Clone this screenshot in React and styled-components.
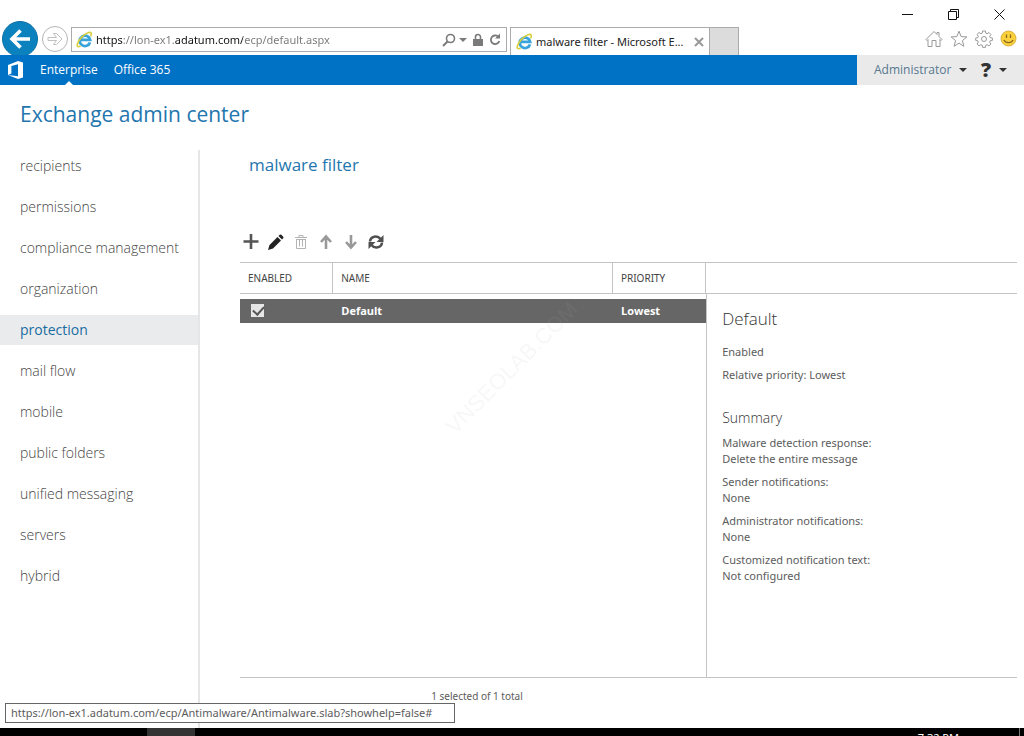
import React from "react";
import styled, { createGlobalStyle, css } from "styled-components";

const BLUE = "#0072c6";
const LINE = "#c4c4c4";
const DISPLAY = `"Open Sans", "Noto Sans", sans-serif`;

const GlobalStyle = createGlobalStyle`
  * { box-sizing: border-box; }
  body { margin: 0; background: #fff; color: #5c5c5c; font-family: "Noto Sans", "Open Sans", sans-serif; font-size: 11px; }
  button, input { font: inherit; color: inherit; }
  h1, h2, h3, p, ul, dl, dd { margin: 0; padding: 0; font-weight: inherit; }
  ul { list-style: none; }
  svg { display: block; flex: none; }
`;

const Screen = styled.div`
  display: flex;
  flex-direction: column;
  height: 100vh;
  overflow: hidden;
  position: relative;
`;

/* Browser frame */
const BrowserFrame = styled.header`
  flex: none;
`;
const WindowControls = styled.div`
  display: flex;
  justify-content: flex-end;
  align-items: center;
  height: 27px;
  padding: 2px 2px 0 0;
`;
const PlainButton = styled.button`
  display: flex;
  align-items: center;
  justify-content: center;
  flex: none;
  padding: 0;
  border: 0;
  background: none;
`;
const WindowButton = styled(PlainButton)`
  width: 46px;
  height: 24px;
  color: #111;
`;
const BrowserBar = styled.div`
  display: flex;
  height: 28px;
  padding: 0 7px 0 2px;
`;
const RoundButton = styled(PlainButton)`
  width: ${(p) => p.$size}px;
  height: ${(p) => p.$size}px;
  border-radius: 50%;
  color: ${(p) => (p.$primary ? "#fff" : "#c0c0c0")};
  background: ${(p) => (p.$primary ? "#0b82be" : "#fff")};
  border: 1px solid ${(p) => (p.$primary ? "#0b6fa8" : "#b5b5b5")};
`;
const History = styled.div`
  display: flex;
  align-items: center;
  gap: 4px;
  width: 69px;
  height: 24px;
`;
const AddressBar = styled.form`
  display: flex;
  align-items: center;
  gap: 3px;
  flex: 0 1 436px;
  height: 25px;
  padding: 0 5px 0 4px;
  border: 1px solid #ababab;
  color: #7a7a7a;
`;
const AddressInput = styled.input`
  flex: 1;
  min-width: 0;
  height: 22px;
  padding: 0;
  border: 0;
  outline: 0;
  color: transparent;
  background: linear-gradient(90deg, #111 27px, #777 27px 79px, #111 79px 147px, #777 147px);
  background-clip: text;
`;
const Tab = styled.div`
  display: flex;
  align-items: center;
  gap: 3px;
  flex: 0 1 200px;
  margin-left: 3px;
  padding: 0 5px;
  border: 1px solid #ababab;
  border-bottom: 0;
  color: #222;
  white-space: nowrap;
`;
const TabTitle = styled.span`
  flex: 1;
`;
const NewTab = styled(PlainButton)`
  width: 29px;
  border: 1px solid #ababab;
  border-width: 1px 1px 0 0;
  background: #dcdcdc;
`;
const BrowserTools = styled.div`
  display: flex;
  align-items: center;
  gap: 7px;
  height: 23px;
  margin-left: auto;
  color: #999;
`;

/* Suite bar */
const SuiteBar = styled.nav`
  position: relative;
  flex: none;
  display: flex;
  align-items: center;
  height: 30px;
  padding-left: 8px;
  background: ${BLUE};
  color: #fff;
  font-family: ${DISPLAY};
  font-size: 12px;
`;
const SuiteLink = styled.a`
  position: relative;
  margin-left: 16px;
  line-height: 30px;
  color: #fff;
  text-decoration: none;
  ${(p) =>
    p.$current &&
    css`
      &::after {
        content: "";
        position: absolute;
        left: 50%;
        bottom: 0;
        margin-left: -4px;
        border: 4px solid transparent;
        border-top: 0;
        border-bottom-color: #fff;
      }
    `}
`;
const UserArea = styled.div`
  display: flex;
  align-items: center;
  justify-content: space-between;
  width: 167px;
  height: 30px;
  margin-left: auto;
  padding: 0 17px;
  background: #eaeaea;
`;
const MenuButton = styled(PlainButton)`
  gap: 8px;
  color: #333;
  line-height: 28px;
  font-size: ${(p) => (p.$strong ? 20 : 11)}px;
  font-weight: ${(p) => (p.$strong ? 800 : 400)};
`;
const UserName = styled.span`
  color: #56788f;
  font-size: 12px;
`;

/* Admin center */
const PageTitle = styled.h1`
  flex: none;
  height: 65px;
  padding: 13px 20px 0;
  color: #1f76ae;
  font-family: ${DISPLAY};
  font-size: 21px;
  line-height: 32px;
`;
const Workspace = styled.div`
  flex: 1;
  min-height: 0;
  display: flex;
`;
const SideNav = styled.ul`
  flex: none;
  display: flex;
  flex-direction: column;
  gap: 11px;
  width: 200px;
  padding-top: 1px;
  border-right: 2px solid #e6e6e6;
  font-family: ${DISPLAY};
`;
const SideLink = styled.a`
  display: block;
  padding-left: 20px;
  line-height: 30px;
  font-size: 14px;
  font-weight: ${(p) => (p.$current ? 400 : 300)};
  color: ${(p) => (p.$current ? "#1a6ca3" : "#444")};
  background: ${(p) => (p.$current ? "#eaebec" : "transparent")};
  text-decoration: none;
`;
const Content = styled.main`
  flex: 1;
  min-width: 0;
  display: flex;
  flex-direction: column;
  padding: 0 7px 0 40px;
`;
const SectionTitle = styled.h2`
  height: 80px;
  padding-left: 9px;
  color: #1f76ae;
  font-family: ${DISPLAY};
  font-size: 17px;
  line-height: 30px;
`;
const Toolbar = styled.div`
  display: flex;
  align-items: center;
  gap: 1px;
  height: 24px;
  margin: 0 0 8px -1px;
`;
const ToolButton = styled(PlainButton)`
  width: 24px;
  height: 24px;
  color: ${(p) => p.$tone};
`;
const SplitView = styled.div`
  flex: 1;
  min-height: 0;
  display: grid;
  grid-template-columns: 3fr 2fr;
  border-top: 1px solid ${LINE};
  border-bottom: 1px solid ${LINE};
`;
const PolicyTable = styled.table`
  width: 100%;
  align-self: start;
  border-collapse: separate;
  border-spacing: 0;
  table-layout: fixed;
  text-align: left;
`;
const HeadCell = styled.th`
  width: ${(p) => p.$width};
  height: 31px;
  padding: 0 8px;
  border-right: 1px solid ${LINE};
  border-bottom: 1px solid ${LINE};
  font-size: 10px;
  font-weight: 400;
  color: #444;
`;
const PolicyRow = styled.tr`
  & > td {
    height: 34px;
    padding: 0 8px 2px;
    color: #fff;
    font-family: ${DISPLAY};
    font-weight: 700;
    border: solid #fff;
    border-width: 5px 0;
    background: #666;
  }
`;
const CheckBox = styled.input`
  appearance: none;
  display: block;
  width: 13px;
  height: 13px;
  margin: 0 0 0 3px;
  background: #e6e6e6;
  &:checked::after {
    content: "";
    display: block;
    width: 5px;
    height: 9px;
    margin: 0 0 0 4px;
    border: solid #555;
    border-width: 0 2px 2px 0;
    transform: rotate(42deg);
  }
`;
const Details = styled.aside`
  display: flex;
  flex-direction: column;
`;
const DetailsHead = styled.div`
  height: 31px;
  flex: none;
  border-bottom: 1px solid ${LINE};
`;
const DetailsBody = styled.div`
  flex: 1;
  padding: 12px 15px;
  border-left: 1px solid ${LINE};
  line-height: 16px;
`;
const DetailsTitle = styled.h3`
  margin-bottom: 12px;
  font-family: ${DISPLAY};
  font-size: 17px;
  line-height: 26px;
  font-weight: 300;
  color: #333;
`;
const Fact = styled.p`
  margin-bottom: 7px;
`;
const SummaryTitle = styled.h3`
  margin: 25px 0 7px;
  font-family: ${DISPLAY};
  font-size: 14px;
  line-height: 20px;
  font-weight: 300;
  color: #333;
`;
const SummaryItem = styled.div`
  margin-bottom: 7px;
`;
const ListFooter = styled.p`
  flex: none;
  height: 50px;
  width: 61%;
  padding-top: 8px;
  font-size: 10px;
  line-height: 20px;
  text-align: center;
`;

const LinkStatus = styled.div`
  position: absolute;
  left: 5px;
  bottom: 13px;
  min-width: 450px;
  height: 20px;
  padding: 0 5px;
  border: 1px solid #666;
  background: #fff;
  line-height: 18px;
  white-space: nowrap;
`;
const Watermark = styled.div`
  position: absolute;
  left: 50%;
  top: 50%;
  transform: translate(-50%, -50%) rotate(-45deg);
  font-family: "Liberation Sans", sans-serif;
  font-size: 22px;
  line-height: 24px;
  color: rgba(170, 170, 170, 0.1);
  pointer-events: none;
`;
const Taskbar = styled.footer`
  flex: none;
  display: flex;
  justify-content: space-between;
  height: 8px;
  padding: 0 4px 0 147px;
  overflow: hidden;
  background: #000;
  color: #fff;
`;
const TaskButton = styled(PlainButton)`
  width: 48px;
  background: #333;
`;
const Clock = styled.time`
  padding: 2px 60px 0 0;
  border-right: 1px solid #777;
  line-height: 16px;
`;

const BrowserLogo = () => (
  <svg width="17" height="17" viewBox="0 0 17 17" fill="none">
    <path d="M14 11.3A5.2 5.2 0 1 1 14.1 8.8H5.2" stroke="#39a3dc" strokeWidth="2.8" />
    <path d="M14.6 5.4C16 2.6 15.3.9 12.7 1.5 8 2.7 2.4 8.7 1.3 13.2c-.6 2.7 1 3 3.3 1.8" stroke="#d9cf3c" strokeWidth="1.6" />
  </svg>
);
const OfficeLogo = () => (
  <svg width="16" height="18" viewBox="0 0 16 18">
    <path fill="#fff" d="M0 4 10 0l5 1.5v15L10 18 0 14l10 1.3V3.2L3.4 4.9v7.7L0 14z" />
  </svg>
);
const Caret = ({ size = 8 }) => (
  <svg width={size} height={size / 2} viewBox="0 0 8 4">
    <path d="M0 0h8L4 4z" fill="currentColor" />
  </svg>
);
const Home = () => (
  <svg width="18" height="18" viewBox="0 0 18 18" fill="none" stroke="currentColor">
    <path d="M1 9.5 9 1.5l3 3V2.5h2v4l3 3-1 1-1-1v7h-4v-6H7v6H3v-7l-1 1z" />
  </svg>
);
const Star = () => (
  <svg width="18" height="18" viewBox="0 0 18 18" fill="none" stroke="currentColor">
    <path d="m9 1.2 2.1 5.4 5.8.3-4.5 3.7 1.5 5.7L9 13.1l-4.9 3.2 1.5-5.7L1.1 6.9l5.8-.3z" />
  </svg>
);
const Gear = () => (
  <svg width="18" height="18" viewBox="0 0 18 18" fill="none" stroke="currentColor">
    <path d="M7.6 1h2.8l.4 2.2 1.3.5 1.9-1.2 1.9 1.9-1.2 1.9.5 1.3 2.2.4v2.4l-2.2.4-.5 1.3 1.2 1.9-1.9 1.9-1.9-1.2-1.3.5-.4 2.2H7.6l-.4-2.2-1.3-.5L4 15.9l-1.9-1.9 1.2-1.9-.5-1.3L.7 10.4V8l2.1-.4.5-1.3L2.1 4.4 4 2.5l1.9 1.2 1.3-.5z" />
    <circle cx="9" cy="9" r="2.5" />
  </svg>
);
const Smiley = () => (
  <svg width="17" height="17" viewBox="0 0 17 17">
    <circle cx="8.5" cy="8.5" r="7.5" fill="#fbd13b" stroke="#d9b040" />
    <path d="M6.5 4.5v3.500M10.5 4.5v3.500M4 10c1.5 3.5 7.5 3.5 9 0" fill="none" stroke="#8a6a20" strokeWidth="1.3" />
  </svg>
);

const TOOLS = [
  ["New", "#555", <path d="M8 0v15M.5 7.5h15" stroke="currentColor" strokeWidth="2.6" />],
  [
    "Edit",
    "#222",
    <g fill="currentColor">
      <path d="m1.5 11 8-8 3.5 3.5-8 8L0 16z" />
      <path d="m10.5 2 1.2-1.2q.8-.8 1.6 0l1.9 1.9q.8.8 0 1.6L14 5.5z" />
    </g>,
  ],
  [
    "Delete",
    "#b4b4b4",
    <path d="M2 3.5h12M6 3V1.5h4V3M3.5 5v9.5h9V5M6.5 5.5v7M9.5 5.5v7M3 5.5h10" stroke="currentColor" fill="none" />,
  ],
  ["Move up", "#999", <path d="M8 15V3M3 8l5-5.5L13 8" stroke="currentColor" strokeWidth="2.6" fill="none" />],
  ["Move down", "#999", <path d="M8 1v12M3 8l5 5.5L13 8" stroke="currentColor" strokeWidth="2.6" fill="none" />],
  [
    "Refresh",
    "#505050",
    <g>
      <path d="M2 7.5C2.5 2 9.5 1 12.5 5M14 8.5C13.5 14 6.5 15 3.5 11" fill="none" stroke="currentColor" strokeWidth="2.6" />
      <path d="M15.5 1v7H8.5zM.5 15V8h7z" fill="currentColor" />
    </g>,
  ],
];

const SECTIONS = [
  "recipients",
  "permissions",
  "compliance management",
  "organization",
  "protection",
  "mail flow",
  "mobile",
  "public folders",
  "unified messaging",
  "servers",
  "hybrid",
];

const SUMMARY = [
  ["Malware detection response:", "Delete the entire message"],
  ["Sender notifications:", "None"],
  ["Administrator notifications:", "None"],
  ["Customized notification text:", "Not configured"],
];

export default function App() {
  return (
    <Screen>
      <GlobalStyle />
      <BrowserFrame>
        <WindowControls>
          <WindowButton aria-label="Minimize">
            <svg width="11" height="11"><path d="M0 5.5h11" stroke="currentColor" /></svg>
          </WindowButton>
          <WindowButton aria-label="Restore">
            <svg width="11" height="11" fill="none" stroke="currentColor">
              <path d="M.5 2.5h8v8h-8zM2.5 2.5v-2h8v8h-2" />
            </svg>
          </WindowButton>
          <WindowButton aria-label="Close">
            <svg width="11" height="11"><path d="m.5.5 10 10m0-10-10 10" stroke="currentColor" /></svg>
          </WindowButton>
        </WindowControls>
        <BrowserBar>
          <History>
            <RoundButton $size={36} $primary aria-label="Back">
              <svg width="22" height="20" viewBox="0 0 22 20" fill="none" stroke="currentColor" strokeWidth="3.6">
                <path d="M21 10H3M11.5 1.5 3 10l8.5 8.5" />
              </svg>
            </RoundButton>
            <RoundButton $size={26} aria-label="Forward">
              <svg width="16" height="14" viewBox="0 0 16 14" fill="none" stroke="currentColor">
                <path d="M1 5.5h8.5L6.5 1.5h3L15 7l-5.5 5.5h-3l3-4H1z" />
              </svg>
            </RoundButton>
          </History>
          <AddressBar onSubmit={(e) => e.preventDefault()}>
            <BrowserLogo />
            <AddressInput aria-label="Address" defaultValue="https://lon-ex1.adatum.com/ecp/default.aspx" />
            <PlainButton type="button" aria-label="Search">
              <svg width="14" height="14" viewBox="0 0 14 14" fill="none" stroke="currentColor">
                <circle cx="8.5" cy="5.5" r="4" strokeWidth="1.6" />
                <path d="M5.5 8.5 1 13" strokeWidth="2" />
              </svg>
            </PlainButton>
            <PlainButton type="button" aria-label="Address list"><Caret size={8} /></PlainButton>
            <PlainButton type="button" aria-label="Security report">
              <svg width="16" height="14" viewBox="0 0 16 14">
                <path d="M5.5 6V4a2.5 2.5 0 0 1 5 0v2" fill="none" stroke="currentColor" strokeWidth="1.6" />
                <path d="M3 6h10v7H3z" fill="currentColor" />
              </svg>
            </PlainButton>
            <PlainButton type="button" aria-label="Refresh page">
              <svg width="12" height="14" viewBox="0 0 12 14" fill="none" stroke="currentColor">
                <path d="M9 3.5A4.3 4.3 0 1 0 10.3 8" strokeWidth="1.8" />
                <path d="M6 5.5h5V.5z" fill="currentColor" stroke="none" />
              </svg>
            </PlainButton>
          </AddressBar>
          <Tab>
            <BrowserLogo />
            <TabTitle>malware filter - Microsoft E...</TabTitle>
            <PlainButton aria-label="Close tab">
              <svg width="10" height="10"><path d="m1 1 8 8m0-8-8 8" stroke="#999" strokeWidth="2" /></svg>
            </PlainButton>
          </Tab>
          <NewTab aria-label="New tab" />
          <BrowserTools>
            <PlainButton aria-label="Home"><Home /></PlainButton>
            <PlainButton aria-label="Favorites"><Star /></PlainButton>
            <PlainButton aria-label="Tools"><Gear /></PlainButton>
            <PlainButton aria-label="Feedback"><Smiley /></PlainButton>
          </BrowserTools>
        </BrowserBar>
      </BrowserFrame>

      <SuiteBar>
        <OfficeLogo />
        <SuiteLink href="#enterprise" $current>Enterprise</SuiteLink>
        <SuiteLink href="#office365">Office 365</SuiteLink>
        <UserArea>
          <MenuButton><UserName>Administrator</UserName><Caret /></MenuButton>
          <MenuButton $strong aria-label="Help">?<Caret /></MenuButton>
        </UserArea>
      </SuiteBar>

      <PageTitle>Exchange admin center</PageTitle>
      <Workspace>
        <SideNav>
          {SECTIONS.map((name) => (
            <li key={name}>
              <SideLink href={"#" + name} $current={name === "protection"}>{name}</SideLink>
            </li>
          ))}
        </SideNav>
        <Content>
          <SectionTitle>malware filter</SectionTitle>
          <Toolbar>
            {TOOLS.map(([label, tone, drawing]) => (
              <ToolButton key={label} $tone={tone} aria-label={label}>
                <svg width="16" height="16" viewBox="0 0 16 16">{drawing}</svg>
              </ToolButton>
            ))}
          </Toolbar>
          <SplitView>
            <PolicyTable>
              <thead>
                <tr>
                  <HeadCell $width="20%">ENABLED</HeadCell>
                  <HeadCell $width="60%">NAME</HeadCell>
                  <HeadCell $width="20%">PRIORITY</HeadCell>
                </tr>
              </thead>
              <tbody>
                <PolicyRow>
                  <td><CheckBox type="checkbox" defaultChecked aria-label="Default enabled" /></td>
                  <td>Default</td>
                  <td>Lowest</td>
                </PolicyRow>
              </tbody>
            </PolicyTable>
            <Details>
              <DetailsHead />
              <DetailsBody>
                <DetailsTitle>Default</DetailsTitle>
                <Fact>Enabled</Fact>
                <Fact>Relative priority: Lowest</Fact>
                <SummaryTitle>Summary</SummaryTitle>
                <dl>
                  {SUMMARY.map(([term, value]) => (
                    <SummaryItem key={term}>
                      <dt>{term}</dt>
                      <dd>{value}</dd>
                    </SummaryItem>
                  ))}
                </dl>
              </DetailsBody>
            </Details>
          </SplitView>
          <ListFooter>1 selected of 1 total</ListFooter>
        </Content>
      </Workspace>

      <Watermark>VNSEOLAB.COM</Watermark>
      <LinkStatus>https://lon-ex1.adatum.com/ecp/Antimalware/Antimalware.slab?showhelp=false#</LinkStatus>
      <Taskbar>
        <TaskButton aria-label="Running program" />
        <Clock>7:32 PM</Clock>
      </Taskbar>
    </Screen>
  );
}
